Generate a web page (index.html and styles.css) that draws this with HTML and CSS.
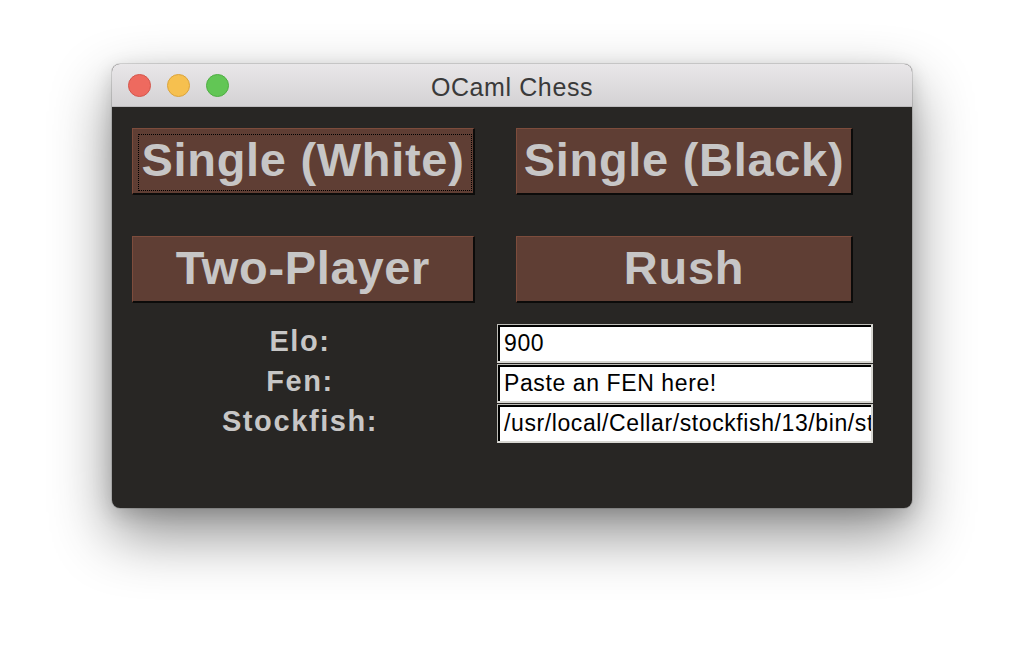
FILE: index.html
```html
<!DOCTYPE html>
<html>
<head>
<meta charset="utf-8">
<title>OCaml Chess</title>
<link rel="stylesheet" href="styles.css">
</head>
<body>
<div class="stage">
  <div class="window">
    <div class="titlebar">
      <div class="lights">
        <span class="light red"></span>
        <span class="light yellow"></span>
        <span class="light green"></span>
      </div>
      <div class="title">OCaml Chess</div>
    </div>
    <div class="content">
      <div class="buttons">
        <div class="btn focused"><span>Single (White)</span></div>
        <div class="btn"><span>Single (Black)</span></div>
        <div class="btn"><span>Two-Player</span></div>
        <div class="btn"><span>Rush</span></div>
      </div>
      <div class="form">
        <div class="label">Elo:</div>
        <div class="entry"><span>900</span></div>
        <div class="label">Fen:</div>
        <div class="entry"><span>Paste an FEN here!</span></div>
        <div class="label">Stockfish:</div>
        <div class="entry"><span>/usr/local/Cellar/stockfish/13/bin/stockfish</span></div>
      </div>
    </div>
  </div>
</div>
</body>
</html>
```
FILE: styles.css
```css
html, body {
  margin: 0;
  padding: 0;
  background: #ffffff;
}
body {
  width: 1024px;
  height: 668px;
  overflow: hidden;
}
.stage {
  padding: 64px 0 0 112px;
}
.window {
  width: 800px;
  height: 444px;
  border-radius: 8px;
  overflow: hidden;
  display: flex;
  flex-direction: column;
  background: #282624;
  box-shadow: 0 0 0 1px rgba(0,0,0,0.12), 0 26px 60px rgba(0,0,0,0.45), 0 6px 20px rgba(0,0,0,0.15);
}
.titlebar {
  height: 42px;
  flex: none;
  position: relative;
  display: flex;
  align-items: center;
  justify-content: center;
  background: linear-gradient(#e9e7e9, #d4d2d4);
  border-bottom: 1px solid #bdbbbd;
}
.lights {
  position: absolute;
  left: 16px;
  top: 10px;
  display: flex;
  gap: 16px;
}
.light {
  width: 23px;
  height: 23px;
  border-radius: 50%;
  box-sizing: border-box;
}
.red { background: #ee6a5f; border: 1px solid #d4564c; }
.yellow { background: #f6c04f; border: 1px solid #dba43c; }
.green { background: #62c655; border: 1px solid #4fae43; }
.title {
  font-family: "Liberation Sans", Arial, sans-serif;
  font-size: 25px;
  color: #3a3a3a;
  letter-spacing: 0.6px;
  padding-top: 4px;
}
.content {
  padding: 21px 0 0 20px;
  font-family: "Liberation Sans", Arial, sans-serif;
}
.buttons {
  display: grid;
  grid-template-columns: 343px 337px;
  grid-auto-rows: 67px;
  column-gap: 41px;
  row-gap: 41px;
}
.btn {
  position: relative;
  box-sizing: border-box;
  background: #5f3e34;
  border-top: 1px solid #7d4c3c;
  border-left: 1px solid #7d4c3c;
  border-right: 2px solid #0c0b0a;
  border-bottom: 2px solid #0c0b0a;
  display: flex;
  align-items: center;
  justify-content: center;
  color: #c7c6c6;
  font-weight: bold;
  font-size: 47px;
  letter-spacing: 0.7px;
  padding-bottom: 4px;
}
.focused::after {
  content: "";
  position: absolute;
  left: 5px;
  top: 5px;
  right: 1px;
  bottom: 2px;
  border: 1px dotted #000;
}
.form {
  margin-top: 21px;
  display: grid;
  grid-template-columns: 336px 376px;
  column-gap: 29px;
  row-gap: 1px;
  align-items: center;
}
.label {
  text-align: center;
  color: #c7c6c6;
  font-weight: bold;
  font-size: 29px;
  letter-spacing: 1.6px;
  padding-bottom: 4px;
}
.entry {
  height: 39px;
  box-sizing: border-box;
  border: 1px solid #bebdb8;
  border-right: 2px solid #d7d6d1;
  border-bottom: 2px solid #d7d6d1;
  background: #fff;
  overflow: hidden;
  white-space: nowrap;
  display: flex;
  align-items: center;
  box-shadow: inset 2px 2px 0 #000;
  padding-left: 6px;
  font-size: 23px;
  color: #000;
  letter-spacing: 0.6px;
}
```
